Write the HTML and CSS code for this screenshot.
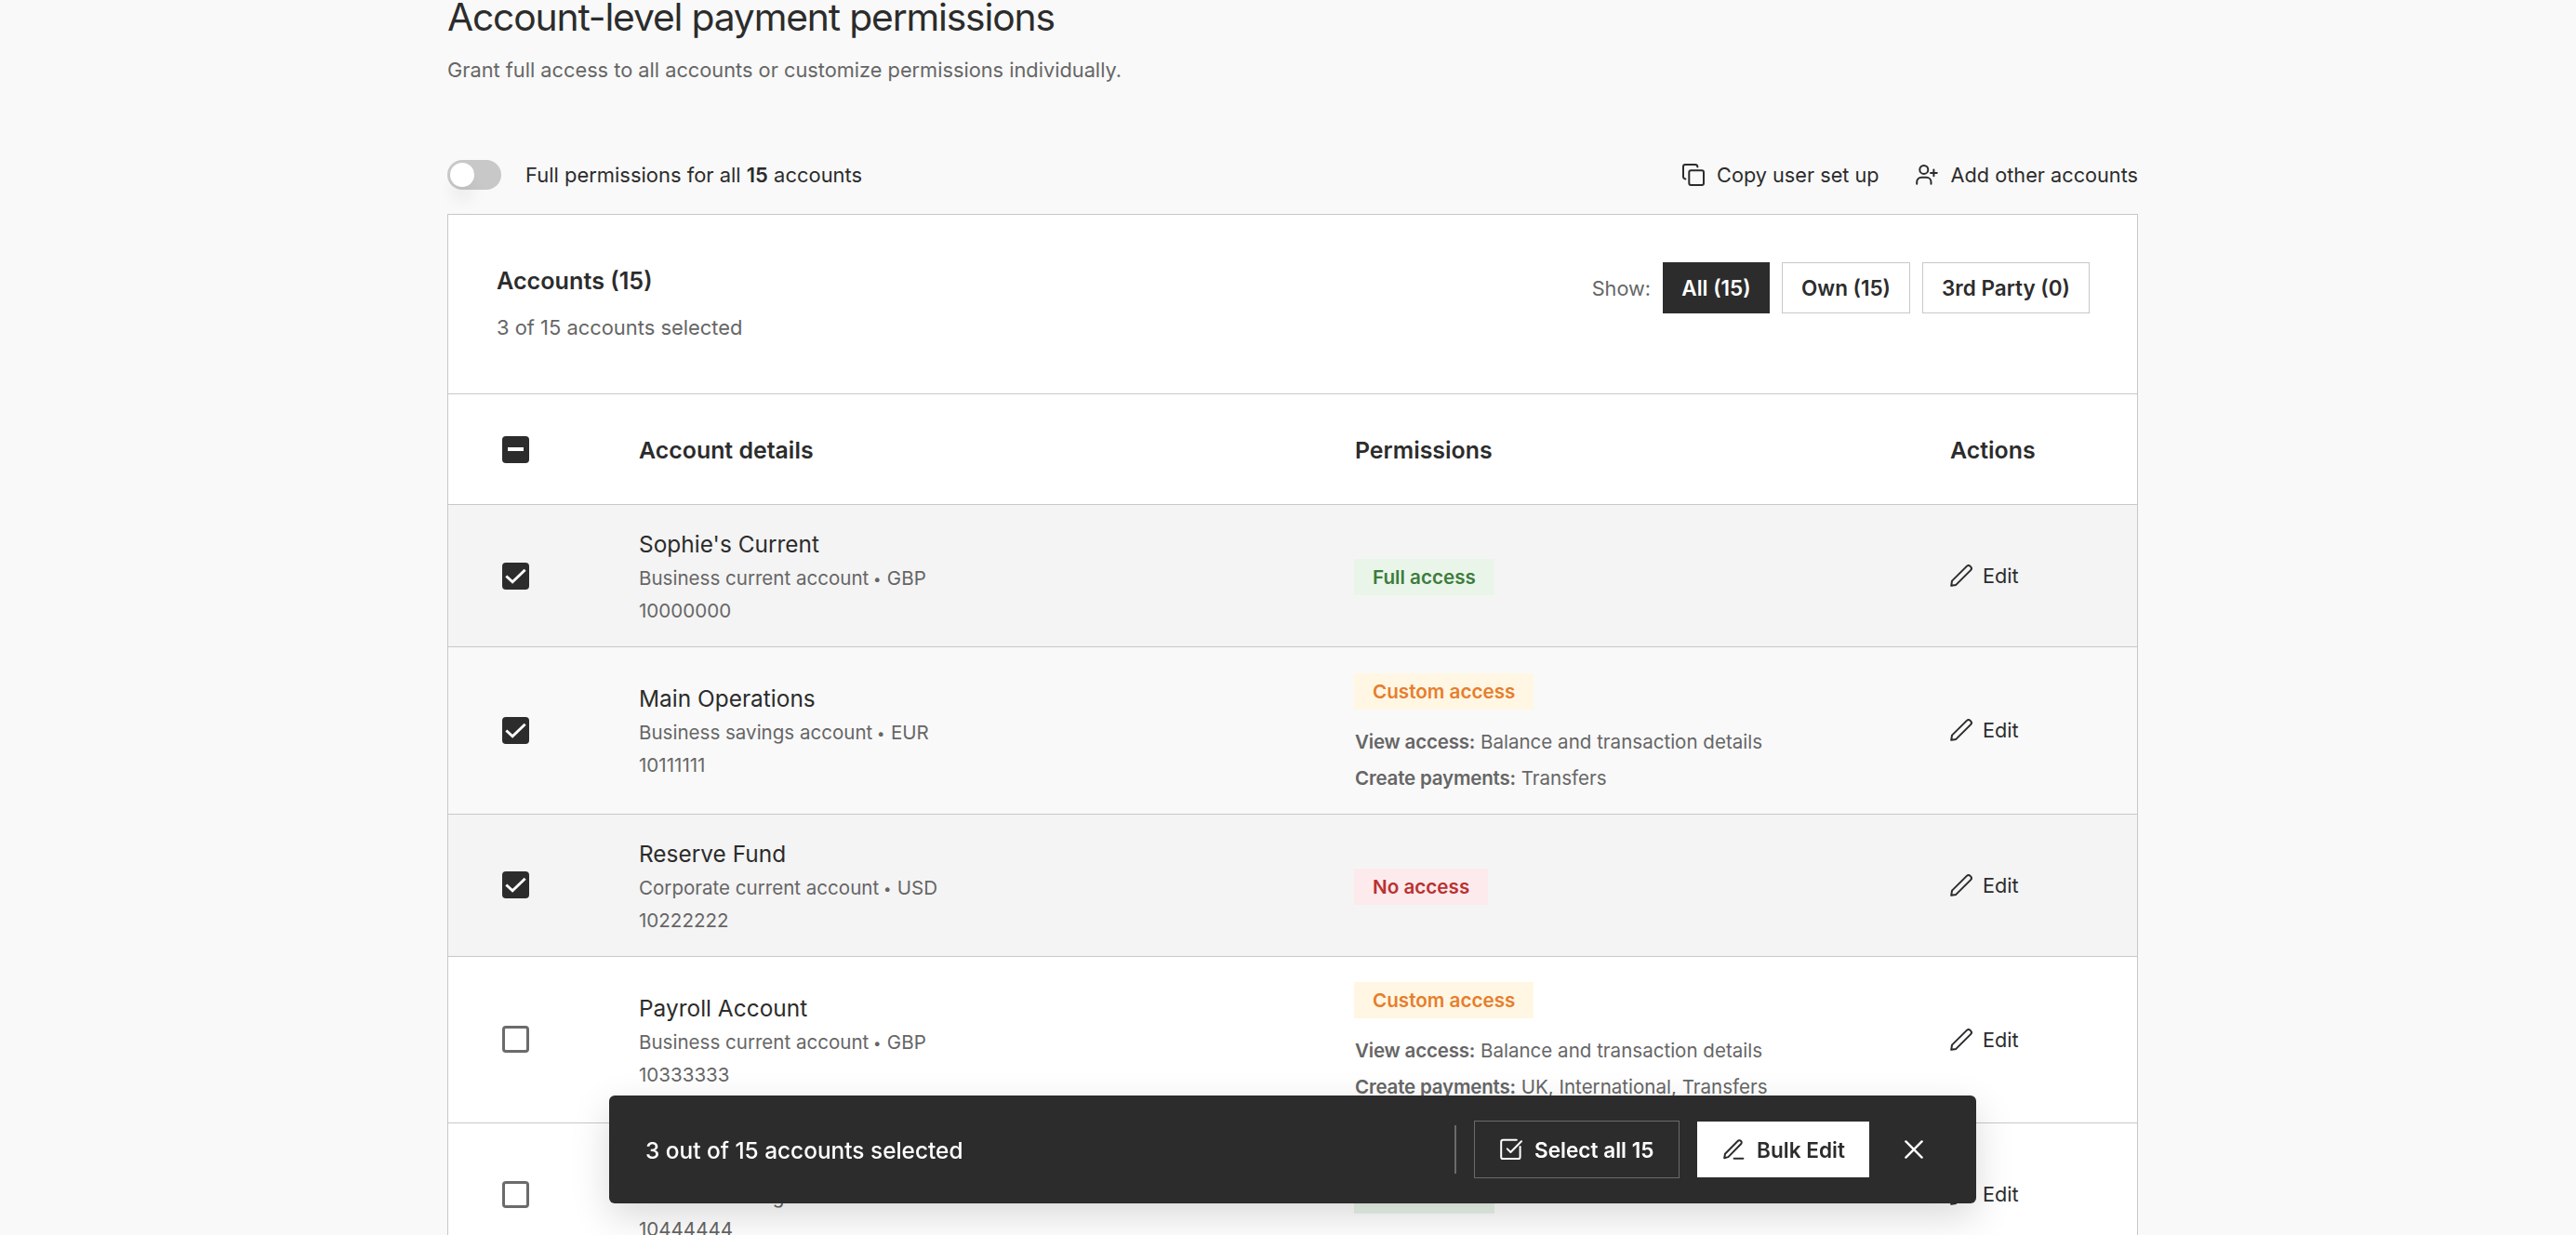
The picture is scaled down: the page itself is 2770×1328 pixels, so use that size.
FILE: index.html
```
<!DOCTYPE html>
<html lang="en">
<head>
    <meta charset="UTF-8">
    <meta name="viewport" content="width=device-width,initial-scale=1">
    <title>Account permissions</title>
    <link rel="stylesheet" href="styles.css">
</head>
<body>
<!-- shared icons -->
<svg class="sprite" aria-hidden="true">
    <symbol id="i-pencil" viewBox="0 0 24 24">
        <path d="M1.2 22.8 2 17.6 17.6 2.1a3 3 0 0 1 4.3 4.3L6.3 21.9Z"/>
    </symbol>
    <symbol id="i-check" viewBox="0 0 30 30">
        <path d="M4.5 15 11.5 21.5 25.5 8"/>
    </symbol>
</svg>

<div class="page">
    <h1 class="title">Account-level payment permissions</h1>
    <p class="subtitle">Grant full access to all accounts or customize permissions individually.</p>

    <div class="toolbar">
        <div class="toggle"><span class="knob"></span></div>
        <span class="toggle-label">Full permissions for all <b>15</b> accounts</span>
        <a class="link copy">
            <svg class="icon" viewBox="0 0 24 24">
                <rect x="7.3" y="7.3" width="15.7" height="15.7" rx="2"/>
                <path d="M16.4 3.4C16.2 1.9 15.4 1 14 1H3.2C1.8 1 1 1.8 1 3.2V14c0 1.4.9 2.2 2.4 2.4"/>
            </svg>
            <span>Copy user set up</span>
        </a>
        <a class="link add">
            <svg class="icon" viewBox="0 0 24 24">
                <circle cx="8.8" cy="6.4" r="4.5"/>
                <path d="M1.2 21.7v-2a5 5 0 0 1 5-5h5.3a5 5 0 0 1 5 5v2M19.4 6.5v6.8M16 9.9h6.8"/>
            </svg>
            <span>Add other accounts</span>
        </a>
    </div>

    <div class="card">
        <div class="card-head">
            <div>
                <h2 class="card-title">Accounts (15)</h2>
                <p class="card-sub">3 of 15 accounts selected</p>
            </div>
            <div class="filters">
                <span class="show">Show:</span>
                <button class="filter active all">All (15)</button>
                <button class="filter own">Own (15)</button>
                <button class="filter third">3rd Party (0)</button>
            </div>
        </div>

        <div class="row thead">
            <div class="box on"><span class="minus"></span></div>
            <div class="th">Account details</div>
            <div class="th">Permissions</div>
            <div class="th">Actions</div>
        </div>

        <div class="row short dark">
            <div class="box on"><svg><use href="#i-check"/></svg></div>
            <div class="details"><p class="name">Sophie's Current</p><p>Business current account <i>•</i> GBP</p><p>10000000</p></div>
            <div class="perms"><span class="badge full">Full access</span></div>
            <a class="link edit"><svg class="icon"><use href="#i-pencil"/></svg><span>Edit</span></a>
        </div>
        <div class="row tall light">
            <div class="box on"><svg><use href="#i-check"/></svg></div>
            <div class="details"><p class="name">Main Operations</p><p>Business savings account <i>•</i> EUR</p><p>10111111</p></div>
            <div class="perms">
                <span class="badge custom">Custom access</span>
                <p><b>View access:</b> Balance and transaction details</p>
                <p><b>Create payments:</b> Transfers</p>
            </div>
            <a class="link edit"><svg class="icon"><use href="#i-pencil"/></svg><span>Edit</span></a>
        </div>
        <div class="row short dark">
            <div class="box on"><svg><use href="#i-check"/></svg></div>
            <div class="details"><p class="name">Reserve Fund</p><p>Corporate current account <i>•</i> USD</p><p>10222222</p></div>
            <div class="perms"><span class="badge none">No access</span></div>
            <a class="link edit"><svg class="icon"><use href="#i-pencil"/></svg><span>Edit</span></a>
        </div>
        <div class="row tall">
            <div class="box"></div>
            <div class="details"><p class="name">Payroll Account</p><p>Business current account <i>•</i> GBP</p><p>10333333</p></div>
            <div class="perms">
                <span class="badge custom">Custom access</span>
                <p><b>View access:</b> Balance and transaction details</p>
                <p><b>Create payments:</b> UK, International, Transfers</p>
            </div>
            <a class="link edit"><svg class="icon"><use href="#i-pencil"/></svg><span>Edit</span></a>
        </div>
        <div class="row short">
            <div class="box"></div>
            <div class="details"><p class="name">&nbsp;</p><p>Business savings account <i>•</i> EUR</p><p>10444444</p></div>
            <div class="perms"><span class="badge full">Full access</span></div>
            <a class="link edit"><svg class="icon"><use href="#i-pencil"/></svg><span>Edit</span></a>
        </div>
    </div>
</div>

<div class="bulk-bar">
    <span class="bulk-text">3 out of 15 accounts selected</span>
    <span class="divider"></span>
    <button class="btn select-all">
        <svg class="icon" viewBox="0 0 24 24">
            <path d="M17.8 1.7H3.4C2 1.7 1.2 2.5 1.2 3.9v16c0 1.4.8 2.2 2.2 2.2h16c1.4 0 2.2-.8 2.2-2.2V9"/>
            <path d="M7.8 11.4 11.4 15 23 3.2"/>
        </svg>
        <span>Select all 15</span>
    </button>
    <button class="btn bulk-edit">
        <svg class="icon" viewBox="0 0 24 24">
            <path d="M2.2 21.2 3 16.8 16.6 3a2.3 2.3 0 0 1 3.6 3L6.4 20.1Z"/>
            <path d="M12.6 21.7h9.8"/>
        </svg>
        <span>Bulk Edit</span>
    </button>
    <svg class="icon close" viewBox="0 0 20 20"><path d="M1.4 1.4 18.6 18.6M18.6 1.4 1.4 18.6"/></svg>
</div>
</body>
</html>
```

FILE: styles.css
```
* {
    box-sizing: border-box;
}
html, body {
    margin: 0;
    padding: 0;
    height: 100%;
    overflow: hidden;
}
body {
    background: #f9f9f9;
    color: #2c2c2c;
    font-family: Inter, "Liberation Sans", sans-serif;
    font-size: 21.7px;
}
h1, h2, p {
    margin: 0;
}
button {
    font-family: inherit;
}
b {
    font-weight: 600;
}
.sprite {
    display: none;
}
.icon {
    width: 24px;
    height: 24px;
    flex: none;
    fill: none;
    stroke: currentColor;
    stroke-width: 2;
    stroke-linecap: round;
    stroke-linejoin: round;
}
/* page is scrolled a little past its top */
.page {
    width: 1818px;
    margin: -6px auto 0 481px;
}
.title {
    font-size: 40.8px;
    font-weight: 400;
    line-height: 48px;
    letter-spacing: -1.17px;
}
.subtitle {
    margin-top: 17px;
    line-height: 32px;
    font-size: 21.78px;
    color: #666;
}

/* toolbar */
.toolbar {
    display: flex;
    align-items: center;
    height: 40px;
    margin: 77px 0 22px;
}
.toggle {
    width: 58px;
    height: 32px;
    padding: 3px;
    border-radius: 16px;
    background: #c8c8c8;
}
.knob {
    display: block;
    width: 26px;
    height: 26px;
    border-radius: 50%;
    background: #fff;
    box-shadow: 0 16px 16px rgba(0, 0, 0, .05);
}
.toggle-label {
    margin-left: 26px;
    flex: 1;
    font-size: 21.95px;
}
.link {
    display: flex;
    align-items: center;
    gap: 13px;
    white-space: nowrap;
}
.add {
    gap: 14px;
    margin-left: 39px;
}

/* card */
.card {
    border: 1px solid #c8c8c8;
    background: #fff;
}
.card-head {
    display: flex;
    justify-content: space-between;
    height: 193px;
    padding: 51px 51px 0 52px;
    border-bottom: 1px solid #c8c8c8;
}
.card-title {
    margin-top: 2px;
    font-size: 25.2px;
    font-weight: 600;
    line-height: 36px;
}
.card-sub {
    margin-top: 16px;
    line-height: 32px;
    font-size: 21.9px;
    color: #666;
}
.filters {
    display: flex;
    gap: 13px;
    height: 55px;
    align-items: center;
}
.show {
    color: #666;
}
.filter {
    height: 55px;
    padding: 0;
    border: 1px solid #c8c8c8;
    background: #fff;
    color: #2c2c2c;
    font-size: 22.5px;
    font-weight: 600;
}
.filter.active {
    background: #2c2c2c;
    border-color: #2c2c2c;
    color: #fff;
}
.all {
    width: 115px;
}
.own {
    width: 138px;
}
.third {
    width: 180px;
}

/* table */
.row {
    display: grid;
    grid-template-columns: 148px 770px 640px 1fr;
    align-items: center;
    padding-left: 57px;
    border-bottom: 1px solid #c8c8c8;
}
.thead {
    height: 119px;
    font-size: 24.9px;
    font-weight: 600;
}
.th {
    padding-top: 2px;
}
.short {
    height: 153px;
}
.tall {
    height: 179.5px;
}
.dark {
    background: #f4f4f4;
}
.light {
    background: #f9f9f9;
}
.box {
    display: flex;
    align-items: center;
    justify-content: center;
    width: 29px;
    height: 29px;
    margin-left: 1px;
    border: 3px solid #6b6b6b;
    border-radius: 4px;
}
.box.on {
    border: 0;
    background: #2c2c2c;
}
.box svg {
    width: 29px;
    height: 29px;
    fill: none;
    stroke: #fff;
    stroke-width: 3;
}
.minus {
    width: 17px;
    height: 4px;
    background: #fff;
}
.details {
    padding-top: 2px;
    font-size: 20.55px;
    line-height: 35px;
    color: #666;
}
/* small dot between account type and currency */
.details i {
    display: inline-block;
    width: 8px;
    font-size: 15px;
    font-style: normal;
    line-height: 1;
    text-indent: -1px;
    vertical-align: 1px;
}
.name {
    font-size: 24.45px;
    line-height: 38px;
    color: #2c2c2c;
}
.perms {
    font-size: 20.55px;
    line-height: 39px;
    color: #666;
}
.perms b {
    letter-spacing: -.2px;
}
.tall .perms {
    padding-top: 9px;
}
.short .perms {
    padding-top: 3px;
}
.badge {
    display: block;
    width: max-content;
    padding: 0 20px;
    margin-left: -1px;
    font-size: 20.65px;
    font-weight: 600;
}
.tall .badge {
    margin-bottom: 15px;
}
.full {
    background: #eaf5ea;
    color: #3c7d3c;
}
.custom {
    background: #fff7e3;
    color: #e67e2e;
}
.none {
    background: #fdeaec;
    color: #b93232;
}
.edit {
    gap: 11px;
}

/* floating bar */
.bulk-bar {
    position: fixed;
    left: 655px;
    bottom: 34px;
    display: flex;
    align-items: center;
    width: 1470px;
    height: 116px;
    padding: 0 57px 0 39px;
    border-radius: 6px;
    background: #2c2c2c;
    color: #fff;
    box-shadow: 0 14px 42px rgba(0, 0, 0, .15);
}
.bulk-text {
    flex: 1;
    padding-top: 1px;
    font-size: 24.4px;
    font-weight: 500;
}
.divider {
    width: 2px;
    height: 52px;
    margin-right: 19px;
    background: #6b6b6b;
}
.btn {
    display: flex;
    align-items: center;
    padding: 0 0 0 27px;
    gap: 13px;
    font-size: 22.6px;
    font-weight: 600;
}
.select-all {
    width: 221px;
    height: 62px;
    border: 1px solid #6b6b6b;
    background: #2c2c2c;
    color: #fff;
}
.bulk-edit {
    width: 185px;
    height: 60px;
    margin: 0 38px 0 19px;
    border: 0;
    background: #fff;
    color: #2c2c2c;
}
.close {
    width: 20px;
    height: 20px;
    stroke-width: 2.4;
}
```
